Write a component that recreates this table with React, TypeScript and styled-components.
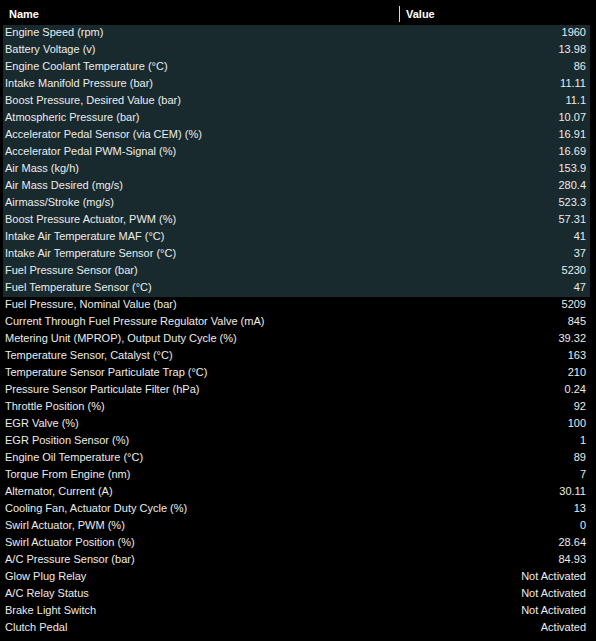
import styled, { createGlobalStyle } from "styled-components";

const GlobalStyle = createGlobalStyle`
    html, body {
        margin: 0;
        background: #000;
    }
    body {
        font-family: "Liberation Sans", Arial, sans-serif;
        font-size: 11px;
        color: #ececec;
    }
`

const Table = styled.div`
    width: 596px;
    padding: 0 6px 0 3px;
    box-sizing: border-box;
`

const HeaderRow = styled.div`
    height: 25px;
    display: grid;
    grid-template-columns: 396px 1fr;
    align-items: center;
    font-weight: bold;
    color: #fff;
`

const HeaderCell = styled.div<{ $divider?: boolean }>`
    display: flex;
    align-items: center;
    height: 16px;
    padding-left: 6px;
    border-left: ${p => p.$divider ? "1px solid #d8d8d8" : "none"};
    margin-top: 2px;
`

const Row = styled.div<{ $selected?: boolean }>`
    height: 17px;
    box-sizing: border-box;
    display: flex;
    align-items: center;
    justify-content: space-between;
    padding: 0 4px 3px 2px;
    background: ${p => p.$selected ? "#182a2e" : "transparent"};
`

const Name = styled.span`
    white-space: nowrap;
`

const Value = styled.span`
    white-space: nowrap;
    text-align: right;
`

const rows: [string, string][] = [
    ["Engine Speed (rpm)", "1960"],
    ["Battery Voltage (v)", "13.98"],
    ["Engine Coolant Temperature (°C)", "86"],
    ["Intake Manifold Pressure (bar)", "11.11"],
    ["Boost Pressure, Desired Value (bar)", "11.1"],
    ["Atmospheric Pressure (bar)", "10.07"],
    ["Accelerator Pedal Sensor (via CEM) (%)", "16.91"],
    ["Accelerator Pedal PWM-Signal (%)", "16.69"],
    ["Air Mass (kg/h)", "153.9"],
    ["Air Mass Desired (mg/s)", "280.4"],
    ["Airmass/Stroke (mg/s)", "523.3"],
    ["Boost Pressure Actuator, PWM (%)", "57.31"],
    ["Intake Air Temperature MAF (°C)", "41"],
    ["Intake Air Temperature Sensor (°C)", "37"],
    ["Fuel Pressure Sensor (bar)", "5230"],
    ["Fuel Temperature Sensor (°C)", "47"],
    ["Fuel Pressure, Nominal Value (bar)", "5209"],
    ["Current Through Fuel Pressure Regulator Valve (mA)", "845"],
    ["Metering Unit (MPROP), Output Duty Cycle (%)", "39.32"],
    ["Temperature Sensor, Catalyst (°C)", "163"],
    ["Temperature Sensor Particulate Trap (°C)", "210"],
    ["Pressure Sensor Particulate Filter (hPa)", "0.24"],
    ["Throttle Position (%)", "92"],
    ["EGR Valve (%)", "100"],
    ["EGR Position Sensor (%)", "1"],
    ["Engine Oil Temperature (°C)", "89"],
    ["Torque From Engine (nm)", "7"],
    ["Alternator, Current (A)", "30.11"],
    ["Cooling Fan, Actuator Duty Cycle (%)", "13"],
    ["Swirl Actuator, PWM (%)", "0"],
    ["Swirl Actuator Position (%)", "28.64"],
    ["A/C Pressure Sensor (bar)", "84.93"],
    ["Glow Plug Relay", "Not Activated"],
    ["A/C Relay Status", "Not Activated"],
    ["Brake Light Switch", "Not Activated"],
    ["Clutch Pedal", "Activated"],
];

const SELECTED_COUNT = 16;

export default function App() {
    return (
        <>
            <GlobalStyle />
            <Table>
                <HeaderRow>
                    <HeaderCell>Name</HeaderCell>
                    <HeaderCell $divider>Value</HeaderCell>
                </HeaderRow>
                {rows.map(([name, value], i) => (
                    <Row key={name} $selected={i < SELECTED_COUNT}>
                        <Name>{name}</Name>
                        <Value>{value}</Value>
                    </Row>
                ))}
            </Table>
        </>
    );
}
